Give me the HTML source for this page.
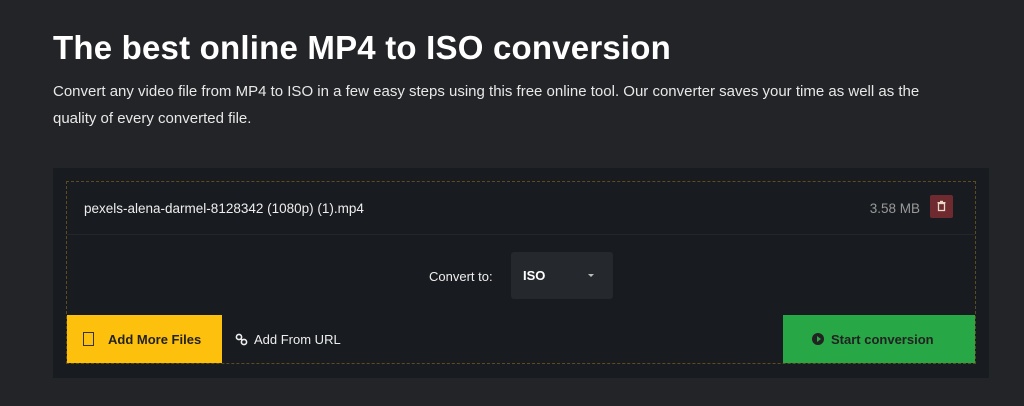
<!DOCTYPE html>
<html><head><meta charset="utf-8"><style>
*{margin:0;padding:0;box-sizing:border-box}
body{width:1024px;height:406px;background:#222427;font-family:"Liberation Sans",sans-serif;color:#fff;position:relative;overflow:hidden}
h1{position:absolute;left:53px;top:29px;font-size:33px;font-weight:bold;white-space:nowrap;letter-spacing:0.2px}
p{position:absolute;left:53px;top:78px;width:905px;font-size:15px;line-height:27px;color:#e8e8e8}
.box{position:absolute;left:53px;top:168px;width:936px;height:210px;background:#181b1f}
.dash{position:absolute;left:13px;top:13px;width:910px;height:183px;border:1px dashed #5e4d1c}
.row{position:absolute;left:0;top:0;width:908px;height:53px;border-bottom:1px solid #23262a}
.fn{position:absolute;left:17px;top:19px;font-size:13.5px;color:#eee}
.sz{position:absolute;right:55px;top:19px;font-size:13.5px;color:#999}
.del{position:absolute;right:22px;top:13px;width:23px;height:23px;background:#6e2a2f;border-radius:2px}
.conv{position:absolute;left:362px;top:87px;font-size:13px;color:#eee}
.sel{position:absolute;left:444px;top:70px;width:102px;height:47px;background:#25282c;border-radius:3px}
.sel b{position:absolute;left:12px;top:16px;font-size:13px}
.sel i{position:absolute;left:77px;top:22px;border-left:3px solid transparent;border-right:3px solid transparent;border-top:3px solid #bbb}
.add{position:absolute;left:0;top:133px;width:155px;height:48px;background:#fdc10d;color:#222;font-weight:bold;font-size:13px}
.add span{position:absolute;left:41px;top:17px}
.add i{position:absolute;left:16px;top:17px;width:11px;height:14px;border:1.5px solid #333}
.url{position:absolute;left:168px;top:150px;font-size:13px;color:#eee}
.start{position:absolute;left:716px;top:133px;width:192px;height:48px;background:#27a745;color:#222;font-weight:bold;font-size:13px}
.start span{position:absolute;left:48px;top:17px}
.start i{position:absolute;left:29px;top:18px;width:12px;height:12px;border-radius:50%;background:#222}
.start i:after{content:"";position:absolute;left:4.5px;top:3px;border-top:3px solid transparent;border-bottom:3px solid transparent;border-left:4.5px solid #27a745}
</style></head><body>
<h1>The best online MP4 to ISO conversion</h1>
<p>Convert any video file from MP4 to ISO in a few easy steps using this free online tool. Our converter saves your time as well as the quality of every converted file.</p>
<div class="box"><div class="dash">
<div class="row"><span class="fn">pexels-alena-darmel-8128342 (1080p) (1).mp4</span><span class="sz">3.58 MB</span>
<div class="del"><svg width="23" height="23" viewBox="0 0 23 23"><rect x="8.5" y="8.5" width="6" height="7" fill="none" stroke="#e8d8c8" stroke-width="1.3"/><rect x="7.5" y="7" width="8" height="1.3" fill="#e8d8c8"/><rect x="10" y="5.8" width="3" height="1.3" fill="#e8d8c8"/></svg></div></div>
<span class="conv">Convert to:</span>
<div class="sel"><b>ISO</b><i></i></div>
<div class="add"><i></i><span>Add More Files</span></div>
<div class="url"><svg width="13" height="13" viewBox="0 0 13 13" style="vertical-align:-2px;margin-right:6px"><circle cx="4" cy="4" r="2.6" fill="none" stroke="#eee" stroke-width="1.6"/><circle cx="9" cy="9" r="2.6" fill="none" stroke="#eee" stroke-width="1.6"/><line x1="5.5" y1="5.5" x2="7.5" y2="7.5" stroke="#eee" stroke-width="1.6"/></svg>Add From URL</div>
<div class="start"><i></i><span>Start conversion</span></div>
</div></div>
</body></html>
